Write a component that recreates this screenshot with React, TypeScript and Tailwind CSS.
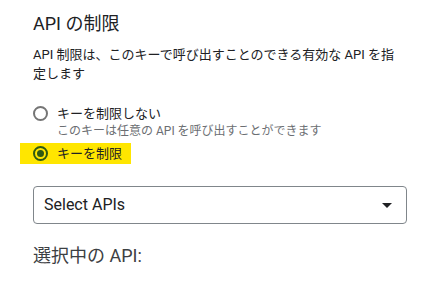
import React, { useState } from "react";

const font = { fontFamily: 'Roboto, "Noto Sans CJK JP", sans-serif' };

function Radio({ checked }: { checked: boolean }) {
  return (
    <span
      className={`flex h-[15px] w-[15px] shrink-0 items-center justify-center rounded-full border-2 ${
        checked ? "border-[#2f5a12]" : "border-[#757575]"
      }`}
    >
      {checked && <span className="h-[7px] w-[7px] rounded-full bg-[#2f5a12]" />}
    </span>
  );
}

export default function App() {
  const [mode, setMode] = useState("restrict");

  return (
    <div className="h-[289px] w-[442px] bg-white text-[#202124]" style={font}>
      <div className="flex w-[407px] flex-col pl-[33px] pt-[12px]">
        <h2 className="text-[18px] leading-[24px]">API の制限</h2>
        <p className="mt-[9px] w-[366px] text-[13px] leading-[19px]">
          API 制限は、このキーで呼び出すことのできる有効な API を指定します
        </p>

        <div className="mt-[21px] flex flex-col">
          <label className="flex cursor-pointer items-start gap-[9px]" onClick={() => setMode("none")}>
            <span className="mt-[2px]">
              <Radio checked={mode === "none"} />
            </span>
            <span className="flex flex-col">
              <span className="text-[13px] leading-[19px]">キーを制限しない</span>
              <span className="text-[12px] leading-[16px] text-[#6b6e72]">
                このキーは任意の API を呼び出すことができます
              </span>
            </span>
          </label>

          <label
            className="-ml-[13px] mt-[4px] flex h-[21px] w-[111px] cursor-pointer items-center gap-[9px] bg-[#ffe600] pl-[13px]"
            onClick={() => setMode("restrict")}
          >
            <Radio checked={mode === "restrict"} />
            <span className="text-[13px] leading-[21px]">キーを制限</span>
          </label>
        </div>

        <button className="mt-[22px] flex h-[38px] w-[374px] items-center justify-between rounded-[4px] border border-[#80868b] pl-[10px] pr-[14px] text-left">
          <span className="text-[16px]">Select APIs</span>
          <svg width="10" height="5" viewBox="0 0 10 5">
            <path d="M0 0 L10 0 L5 5 Z" fill="#202124" />
          </svg>
        </button>

        <p className="mt-[20px] text-[18px] leading-[24px] text-[#3c4043]">選択中の API:</p>
      </div>
    </div>
  );
}
